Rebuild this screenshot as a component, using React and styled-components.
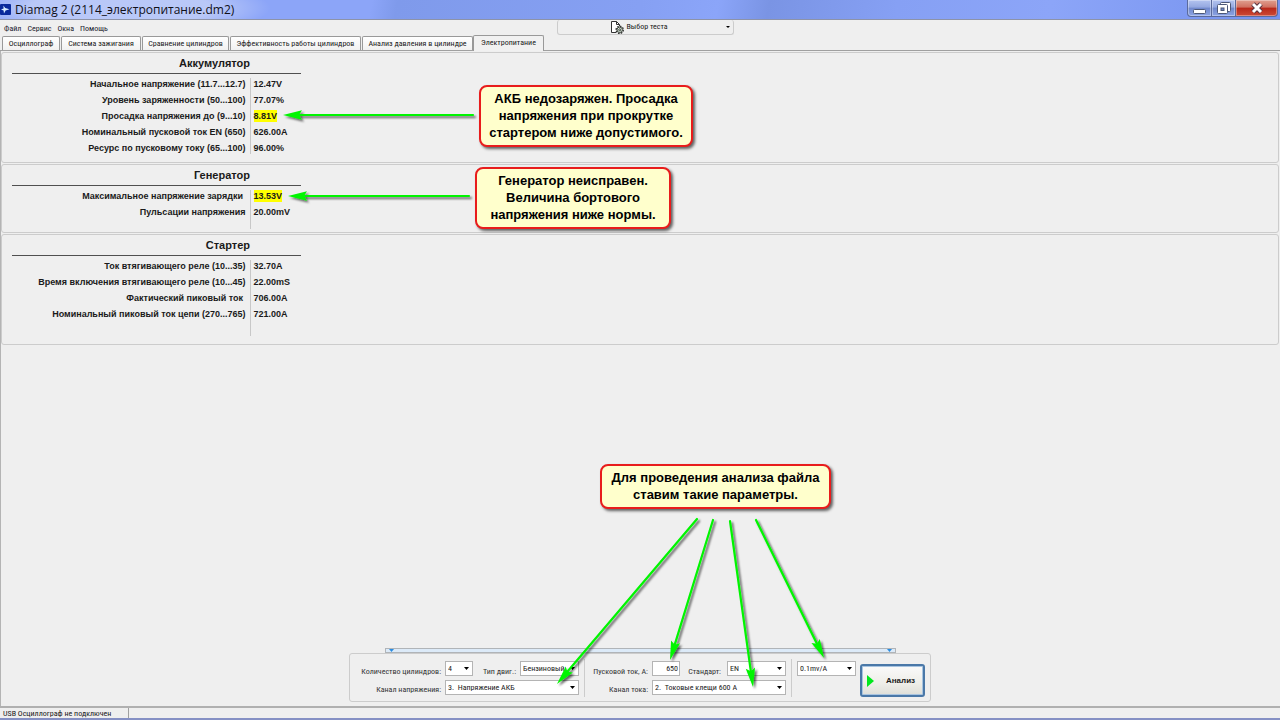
import React from "react";
import styled, { createGlobalStyle, css } from "styled-components";

const GlobalStyle = createGlobalStyle`
  *, *::before, *::after { box-sizing: border-box; }
  body { margin: 0; background: #efefef; }
  button, input, select { font: inherit; color: inherit; margin: 0; }
`;

const Window = styled.div`
  position: relative;
  display: flex;
  flex-direction: column;
  min-height: 100vh;
  overflow: hidden;
  background: #efefef;
  color: #1a1a1a;
  font-family: "Liberation Sans Narrow", "Roboto Condensed", "Open Sans Condensed", Roboto, sans-serif;
  font-size: 8px;
  line-height: 10px;
`;

const TitleBar = styled.header`
  display: flex;
  align-items: center;
  height: 20px;
  border-bottom: 1px solid #8d93a8;
  background:
    radial-gradient(ellipse 150px 30px at 120px 8px, rgba(190, 204, 248, 0.9) 60%, rgba(190, 204, 248, 0) 100%),
    linear-gradient(100deg, #8ca5f8 0, #8ca5f8 29%, #7f9aeb 31%, #86a0f3 50%, #8ba5f9 56%, #7a94e4 60%, #86a0f4 70%, #8ca5f8 82%, #7592ee 100%);
`;

const Title = styled.h1`
  flex: 1;
  margin: 0 0 0 4px;
  font: 400 12px/18px "Comic Sans MS", "Open Sans", sans-serif;
  color: #101018;
`;

const Captions = styled.div`
  display: flex;
  align-self: flex-start;
  margin-right: 2px;
`;

const CaptionButton = styled.button`
  display: flex;
  align-items: center;
  justify-content: center;
  width: ${(p) => (p.$close ? 43 : 25)}px;
  height: 17px;
  padding: 0;
  border: 1px solid #5a6a9c;
  border-top: 0;
  margin-left: -1px;
  background: ${(p) =>
    p.$close
      ? "linear-gradient(#e0a090, #d07060 45%, #b8281a 50%, #cc4a36)"
      : "linear-gradient(#b4c4f0, #94a8e0 45%, #7088cc 50%, #8ca4e4)"};
  box-shadow: inset 0 0 0 1px rgba(255, 255, 255, 0.35);
  &:first-child { border-bottom-left-radius: 4px; }
  &:last-child { border-bottom-right-radius: 4px; }
`;

const TopRow = styled.div`
  display: flex;
  justify-content: space-between;
  height: 15px;
`;

const Menu = styled.nav`
  display: flex;
  gap: 6px;
  width: 200px;
  padding: 4px 0 0 4px;
`;

const MenuLink = styled.a`
  color: #20202c;
  text-decoration: none;
`;

const TestPicker = styled.button`
  display: flex;
  align-items: center;
  justify-content: flex-end;
  gap: 3px;
  width: 177px;
  height: 15px;
  padding: 0 3px 0 0;
  border: 1px solid #cccccc;
  border-top: 0;
  border-radius: 3px;
  background: #efefef;
  span { flex: 0 0 96px; text-align: left; }
`;

const TopSpacer = styled.div`
  width: 190px;
`;

const Tabs = styled.div`
  display: flex;
  align-items: flex-end;
  gap: 1px;
  height: 16px;
  padding-left: 2px;
  border-bottom: 1px solid #a0a0a0;
`;

const Tab = styled.button`
  height: 14px;
  width: ${(p) => p.$width}px;
  padding: 0;
  white-space: nowrap;
  border: 1px solid #999999;
  border-bottom: 0;
  border-radius: 2px 2px 0 0;
  background: linear-gradient(#ffffff, #f1f1f1);
  ${(p) =>
    p.$active &&
    css`
      height: 16px;
      padding-bottom: 2px;
      margin: 0 0 -1px -1px;
      background: #f1f1f1;
    `}
`;

const Workspace = styled.main`
  display: flex;
  flex: 1;
  flex-direction: column;
  gap: 1px;
  padding: 1px 1px 4px 0;
  border-left: 1px solid #b4b4b4;
`;

const Section = styled.section`
  min-height: ${(p) => p.$minHeight}px;
  padding-left: 10px;
  border: 1px solid #cccccc;
  border-radius: 3px;
  font: 700 9px/12px "Liberation Sans", Arial, sans-serif;
`;

const SectionTitle = styled.h2`
  width: 289px;
  margin: 0 0 4px;
  padding-right: 51px;
  border-bottom: 1px solid #505050;
  font-size: 11px;
  line-height: 20px;
  text-align: right;
`;

const Readings = styled.table`
  border-collapse: collapse;
  th, td { padding: 0 0 4px; vertical-align: top; white-space: nowrap; }
  th {
    width: 238px;
    padding-right: 4px;
    border-right: 1px solid #c8c8c8;
    text-align: right;
  }
  td { padding-left: 3px; }
  tr:last-child > * { padding-bottom: ${(p) => p.$tail}px; }
`;

const Value = styled.span`
  display: inline-block;
  background: ${(p) => (p.$alert ? "#ffff00" : "transparent")};
`;

const Spacer = styled.div`
  flex: 1;
`;

const Dock = styled.div`
  display: flex;
  flex-direction: column;
  align-items: center;
`;

const Splitter = styled.div`
  display: flex;
  align-items: center;
  justify-content: space-between;
  width: 511px;
  height: 5px;
  padding: 0 3px;
  border: 1px solid #b0b4b8;
  background: #dceaf8;
`;

const Form = styled.form`
  display: flex;
  height: 49px;
  padding: 5px 5px 0 8px;
  border: 1px solid #cccccc;
  border-radius: 3px;
`;

const Group = styled.div`
  display: grid;
  grid-template-columns: ${(p) => p.$columns};
  grid-template-rows: 16px 15px;
  row-gap: 3px;
  padding-top: 2px;
  padding-right: 5px;
  & + & {
    height: 38px;
    padding-left: 5px;
    border-left: 1px solid #cccccc;
  }
`;

const Label = styled.label`
  align-self: end;
  padding-right: ${(p) => p.$gap || 4}px;
  text-align: right;
  white-space: nowrap;
  color: #333333;
`;

const SelectBox = styled.div`
  position: relative;
  height: 15px;
  grid-column: ${(p) => (p.$wide ? "span 3" : "auto")};
  svg { position: absolute; right: 4px; top: 6px; pointer-events: none; }
`;

const fieldLook = css`
  display: block;
  width: 100%;
  height: 15px;
  padding: 0 2px;
  border: 1px solid #b4b4b4;
  border-radius: 0;
  background: #ffffff;
`;

const Select = styled.select`
  ${fieldLook}
  appearance: none;
`;

const NumberInput = styled.input`
  ${fieldLook}
  padding: 0 1px;
  text-align: right;
`;

const AnalyzeButton = styled.button`
  display: flex;
  align-items: center;
  gap: 12px;
  width: 65px;
  height: 33px;
  margin: 5px 0 0 -1px;
  padding: 0 0 0 5px;
  border: 2px solid #4a78a8;
  border-radius: 3px;
  background: linear-gradient(#fafafa, #eeeee8 60%, #deded8);
  box-shadow: inset 0 0 0 1px #a8c4e0;
  font: 700 8px/10px "Liberation Sans", sans-serif;
`;

const StatusBar = styled.footer`
  display: flex;
  height: 14px;
  border-top: 2px solid #b0b0b0;
  border-bottom: 2px solid #8590c4;
`;

const StatusCell = styled.div`
  width: 129px;
  padding: 1px 0 0 3px;
  border-right: 1px solid #a0a0a0;
`;

const Callout = styled.aside`
  position: absolute;
  left: ${(p) => p.$left};
  top: ${(p) => p.$top};
  width: ${(p) => p.$width}px;
  padding: 3px 0 4px;
  border: 2px solid #e81c1c;
  border-radius: 8px;
  background: #ffffcc;
  box-shadow: 2px 2px 3px rgba(0, 0, 0, 0.6);
  font: 700 13px/17px "Liberation Sans", Arial, sans-serif;
  color: #000000;
  text-align: center;
  white-space: nowrap;
`;

const TopArrows = styled.svg`
  position: absolute;
  left: 270px;
  top: 100px;
  pointer-events: none;
`;

const ParameterNote = styled.div`
  position: absolute;
  left: 50%;
  bottom: 0;
  width: 0;
  height: 256px;
  pointer-events: none;
`;

const BottomArrows = styled.svg`
  position: absolute;
  left: -100px;
  top: 46px;
`;

function Arrow({ x1, y1, x2, y2 }) {
  const length = Math.hypot(x2 - x1, y2 - y1);
  const angle = (Math.atan2(y2 - y1, x2 - x1) * 180) / Math.PI;
  return (
    <g transform={`translate(${x1} ${y1}) rotate(${angle})`}>
      <path d={`M0 0H${length - 14}`} stroke="#00f500" strokeWidth="2.2" strokeLinecap="round" />
      <path d={`M${length} 0L${length - 19} -4.7L${length - 16} 0L${length - 19} 4.7Z`} fill="#00f500" />
    </g>
  );
}

function ShadowFilter({ id }) {
  return (
    <filter id={id} x="-10%" y="-100%" width="120%" height="300%" filterUnits="objectBoundingBox">
      <feDropShadow dx="2" dy="2" stdDeviation="1.2" floodColor="#000" floodOpacity="0.6" />
    </filter>
  );
}

function Dropdown({ id, label, children, wide }) {
  return (
    <SelectBox $wide={wide}>
      <Select id={id} aria-label={label}>
        <option>{children}</option>
      </Select>
      <svg width="5" height="3" viewBox="0 0 5 3" aria-hidden="true">
        <path d="M0 0H5L2.5 3Z" fill="#000" />
      </svg>
    </SelectBox>
  );
}

const tabs = [
  ["Осциллограф", 58],
  ["Система зажигания", 80],
  ["Сравнение цилиндров", 87],
  ["Эффективность работы цилиндров", 131],
  ["Анализ давления в цилиндре", 111],
  ["Электропитание", 71],
];

const sections = [
  {
    title: "Аккумулятор",
    minHeight: 111,
    tail: 0,
    rows: [
      ["Начальное напряжение (11.7...12.7)", "12.47V"],
      ["Уровень заряженности (50...100)", "77.07%"],
      ["Просадка напряжения до (9...10)", "8.81V", true],
      ["Номинальный пусковой ток EN (650)", "626.00A"],
      ["Ресурс по пусковому току (65...100)", "96.00%"],
    ],
  },
  {
    title: "Генератор",
    minHeight: 69,
    tail: 11,
    rows: [
      ["Максимальное напряжение зарядки\u00a0", "13.53V", true],
      ["Пульсации напряжения", "20.00mV"],
    ],
  },
  {
    title: "Стартер",
    minHeight: 111,
    tail: 16,
    rows: [
      ["Ток втягивающего реле (10...35)", "32.70A"],
      ["Время включения втягивающего реле (10...45)", "22.00mS"],
      ["Фактический пиковый ток\u00a0", "706.00A"],
      ["Номинальный пиковый ток цепи (270...765)", "721.00A"],
    ],
  },
];

export default function App() {
  return (
    <Window>
      <GlobalStyle />
      <TitleBar>
        <svg width="11" height="11" viewBox="0 0 11 11" aria-hidden="true">
          <rect width="11" height="11" rx="1" fill="#0a2a9c" />
          <path d="M3.4 1.5L5.2 4L9.5 5.2L5.6 6.6L4 9.5L3.6 6.4L1 5.4L3.6 4.4Z" fill="#d8ecff" />
        </svg>
        <Title>Diamag 2 (2114_электропитание.dm2)</Title>
        <Captions>
          <CaptionButton aria-label="Свернуть">
            <svg width="13" height="14" viewBox="0 0 13 14">
              <rect x="0.5" y="8.5" width="12" height="4" rx="1" fill="#fff" stroke="#4c5878" />
            </svg>
          </CaptionButton>
          <CaptionButton aria-label="Развернуть">
            <svg width="14" height="14" viewBox="0 0 14 14">
              <rect x="3.5" y="1.5" width="10" height="9" rx="1" fill="#fff" stroke="#4c5878" />
              <rect x="0.5" y="3.5" width="10" height="9" rx="1" fill="#fff" stroke="#4c5878" />
              <rect x="4" y="7" width="3" height="2.5" fill="#6f88c8" stroke="#4c5878" />
            </svg>
          </CaptionButton>
          <CaptionButton $close aria-label="Закрыть">
            <svg width="14" height="12" viewBox="0 0 14 12">
              <path d="M3 2L11 10M11 2L3 10" stroke="#5a3540" strokeWidth="5" />
              <path d="M3 2L11 10M11 2L3 10" stroke="#fff" strokeWidth="3" />
            </svg>
          </CaptionButton>
        </Captions>
      </TitleBar>
      <TopRow>
        <Menu>
          {["Файл", "Сервис", "Окна", "Помощь"].map((m) => (
            <MenuLink key={m} href="#">{m}</MenuLink>
          ))}
        </Menu>
        <TestPicker>
          <svg width="13" height="13" viewBox="0 0 13 13" fill="none" aria-hidden="true">
            <path d="M5 11.5H0.5V0.5H5.5L8.5 3.5V5" fill="#fff" stroke="#333" />
            <path d="M5.5 0.5V3.5H8.5" stroke="#333" />
            <circle cx="8.7" cy="8.8" r="3.5" stroke="#333" strokeWidth="1.6" strokeDasharray="1.6 1.1" />
            <circle cx="8.7" cy="8.8" r="2.7" fill="#dfe8df" stroke="#3c463c" />
            <circle cx="8.7" cy="8.8" r="1" stroke="#3c463c" />
          </svg>
          <span>Выбор теста</span>
          <svg width="4" height="2" viewBox="0 0 4 2" aria-hidden="true">
            <path d="M0 0H4L2 2Z" fill="#000" />
          </svg>
        </TestPicker>
        <TopSpacer />
      </TopRow>
      <Tabs role="tablist">
        {tabs.map(([name, width], i) => (
          <Tab key={name} role="tab" $width={width} $active={i === 5} aria-selected={i === 5}>
            {name}
          </Tab>
        ))}
      </Tabs>
      <Workspace>
        {sections.map((s) => (
          <Section key={s.title} $minHeight={s.minHeight}>
            <SectionTitle>{s.title}</SectionTitle>
            <Readings $tail={s.tail}>
              <tbody>
                {s.rows.map(([name, value, alert]) => (
                  <tr key={name}>
                    <th scope="row">{name}</th>
                    <td><Value $alert={alert}>{value}</Value></td>
                  </tr>
                ))}
              </tbody>
            </Readings>
          </Section>
        ))}
        <Spacer />
        <Dock>
          <Splitter>
            <svg width="5" height="3" viewBox="0 0 5 3"><path d="M0 0H5L2.5 3Z" fill="#2a8ce0" /></svg>
            <svg width="5" height="3" viewBox="0 0 5 3"><path d="M0 0H5L2.5 3Z" fill="#2a8ce0" /></svg>
          </Splitter>
          <Form onSubmit={(e) => e.preventDefault()}>
            <Group $columns="87px 28px 47px 59px">
              <Label htmlFor="cylinders">Количество цилиндров:</Label>
              <Dropdown id="cylinders">4</Dropdown>
              <Label htmlFor="engine">Тип двиг.:</Label>
              <Dropdown id="engine">Бензиновый</Dropdown>
              <Label htmlFor="voltage">Канал напряжения:</Label>
              <Dropdown id="voltage" wide>{"3.\u00a0\u00a0Напряжение АКБ"}</Dropdown>
            </Group>
            <Group $columns="62px 28px 47px 59px">
              <Label htmlFor="current">Пусковой ток, А:</Label>
              <NumberInput id="current" defaultValue="650" />
              <Label htmlFor="standard" $gap={6}>Стандарт:</Label>
              <Dropdown id="standard">EN</Dropdown>
              <Label htmlFor="clamp">Канал тока:</Label>
              <Dropdown id="clamp" wide>{"2.\u00a0\u00a0Токовые клещи 600 А"}</Dropdown>
            </Group>
            <Group $columns="59px">
              <Dropdown label="Чувствительность">0.1mv/A</Dropdown>
            </Group>
            <AnalyzeButton>
              <svg width="7" height="12" viewBox="0 0 7 12" aria-hidden="true">
                <path d="M0 0L7 6L0 12Z" fill="#00e81c" />
              </svg>
              Анализ
            </AnalyzeButton>
          </Form>
        </Dock>
      </Workspace>
      <StatusBar>
        <StatusCell>USB Осциллограф не подключен</StatusCell>
      </StatusBar>

      <Callout $left="479px" $top="85px" $width={214}>
        АКБ недозаряжен. Просадка<br />напряжения при прокрутке<br />стартером ниже допустимого.
      </Callout>
      <Callout $left="475px" $top="167px" $width={196}>
        Генератор неисправен.<br />Величина бортового<br />напряжения ниже нормы.
      </Callout>
      <TopArrows width="210" height="110" fill="none" aria-hidden="true">
        <ShadowFilter id="top-shadow" />
        <g filter="url(#top-shadow)">
          <Arrow x1={203} y1={15} x2={13} y2={15} />
          <Arrow x1={199} y1={96} x2={18} y2={96} />
        </g>
      </TopArrows>
      <ParameterNote>
        <Callout $left="-40px" $top="0" $width={231}>
          Для проведения анализа файла<br />ставим такие параметры.
        </Callout>
        <BottomArrows width="300" height="190" fill="none" aria-hidden="true">
          <ShadowFilter id="bottom-shadow" />
          <g filter="url(#bottom-shadow)">
            <Arrow x1={157} y1={9} x2={17} y2={174} />
            <Arrow x1={173} y1={10} x2={130} y2={150} />
            <Arrow x1={190} y1={11} x2={213} y2={177} />
            <Arrow x1={216} y1={10} x2={284} y2={148} />
          </g>
        </BottomArrows>
      </ParameterNote>
    </Window>
  );
}
